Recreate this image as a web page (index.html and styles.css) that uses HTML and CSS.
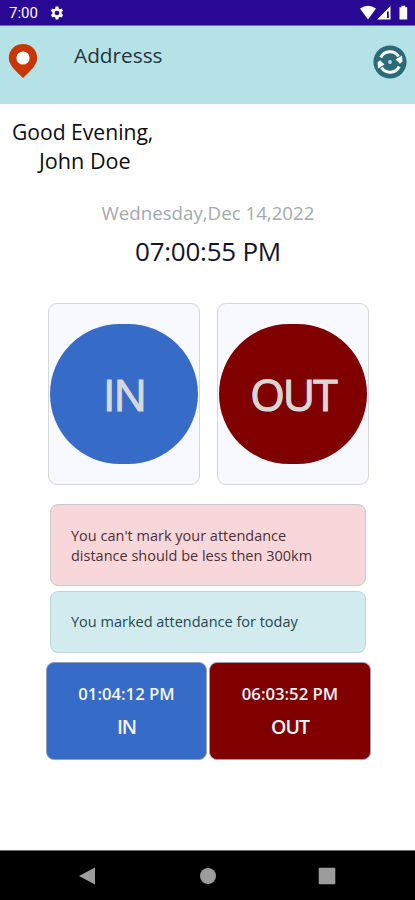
FILE: index.html
```html
<!DOCTYPE html>
<html lang="en">
<head>
<meta charset="utf-8">
<title>Attendance</title>
<link rel="stylesheet" href="styles.css">
</head>
<body>
<div class="phone">
  <div class="status">
    <span class="clock">7:00</span>
    <svg class="gear" viewBox="0 0 24 24"><path fill-rule="evenodd" d="M9.6 1h4.8l.6 3.3 1.9 1.1 3.2-1.2 2.4 4.1-2.6 2.2v2.9l2.6 2.2-2.4 4.1-3.2-1.2-1.9 1.1-.6 3.4H9.6L9 19.600l-1.900-1.100-3.200 1.200-2.400-4.100 2.600-2.200v-2.900L1.500 8.300l2.400-4.100 3.200 1.200L9 4.300zM12 8a4 4 0 1 0 0 8 4 4 0 0 0 0-8z"/></svg>
    <svg class="signals" viewBox="0 0 48 16"><path d="M0 3.500Q8 -2 16 3.500L8 14.500z"/><path fill-rule="evenodd" d="M17 14.500L30.500 1v13.500zM27 6.500v6.500h1.800V6.500z"/><path d="M39.500 2.200h2V.800h3.800v1.400h1.900V14.500h-7.700z"/></svg>
  </div>
  <header class="bar">
    <svg class="pin" viewBox="0 0 30 36"><path fill="#c93606" d="M15 1C7 1 .800 7 .800 15c0 7.500 7.200 13 14.200 20 7-7 14.200-12.500 14.200-20C29.200 7 23 1 15 1z"/><circle cx="15" cy="15" r="6.600" fill="#fff"/></svg>
    <span class="address">Addresss</span>
    <svg class="sync" viewBox="0 0 34 34"><circle cx="17" cy="17" r="16.600" fill="#2b6a78"/><g fill="none" stroke="#fff" stroke-width="3"><path d="M7.800 12.500A10.200 10.200 0 0 1 25.500 11.500"/><path d="M26.200 21.500A10.200 10.200 0 0 1 8.500 22.500"/></g><path fill="#fff" d="M22.500 14.500l6.500-4 .5 6-2.500 2.300zM11.500 19.500L5 23.500 4.500 17.500l2.500-2.300z"/><circle cx="17" cy="17" r="1.900" fill="#b5e2e7"/></svg>
  </header>
  <main>
    <div class="greeting"><p class="hello">Good Evening,</p><p class="name">John Doe</p></div>
    <p class="date">Wednesday,Dec 14,2022</p>
    <p class="time">07:00:55 PM</p>
    <div class="actions">
      <div class="card"><button class="mark in">IN</button></div>
      <div class="card"><button class="mark out">OUT</button></div>
    </div>
    <div class="alert error"><p>You can't mark your attendance</p><p>distance should be less then 300km</p></div>
    <div class="alert info"><p>You marked attendance for today</p></div>
    <div class="records">
      <div class="record in"><span>01:04:12 PM</span><b>IN</b></div>
      <div class="record out"><span>06:03:52 PM</span><b>OUT</b></div>
    </div>
  </main>
  <nav class="nav"><svg viewBox="0 0 18 18"><path d="M0 9L16 .500v17z"/></svg><svg viewBox="0 0 18 18"><circle cx="9" cy="9" r="8"/></svg><svg viewBox="0 0 18 18"><rect x=".700" y=".700" width="16.600" height="16.600" rx="1"/></svg></nav>
</div>
</body>
</html>
```
FILE: styles.css
```css
* { box-sizing: border-box; }
body { margin: 0; background: #fff; font-family: "Open Sans", sans-serif; }
p { margin: 0; white-space: nowrap; }
.phone { width: 415px; height: 900px; display: flex; flex-direction: column; overflow: hidden; }
.status { height: 26px; background: #290894; border-bottom: 1px solid #6a70ba; display: flex; align-items: center; padding: 1px 7px 0 9px; color: #fff; }
.clock { font: 15px/20px Roboto, sans-serif; width: 41px; }
.gear { width: 14px; height: 14px; fill: #fff; }
.signals { width: 48px; height: 16px; margin-left: auto; fill: #fff; }
.bar { height: 78px; background: #b5e2e7; display: flex; align-items: flex-start; padding: 17px 8px 0; }
.pin { width: 30px; height: 36px; }
.address { font-size: 20.8px; line-height: 24px; margin-left: 36px; color: #26333d; }
.sync { width: 34px; height: 34px; margin: 2px 0 0 auto; }
main { flex: 1; }
.greeting { padding: 13px 0 0 12px; color: #0b0b0f; font-size: 21.1px; line-height: 29px; }
.name { padding-left: 27px; font-size: 21.6px; line-height: 30px; }
.date { margin-top: 25px; padding-left: 1px; text-align: center; font-size: 18.7px; line-height: 24px; color: #a5a9ac; }
.time { margin-top: 9px; padding-left: 1px; text-align: center; font-size: 26px; letter-spacing: -.25px; line-height: 34px; color: #14152c; }
.actions { display: flex; gap: 17px; margin: 35px 0 0 48px; }
.card { width: 152px; height: 182px; border: 1px solid #d5d6dc; border-radius: 9px; background: #f8f9ff; display: flex; align-items: center; justify-content: center; }
.mark { width: 148px; height: 140px; padding: 0; border: 0; border-radius: 70px; color: #d8d8d8; font: 400 44.5px/60px "Open Sans", sans-serif; letter-spacing: -2px; -webkit-text-stroke: 1.1px #d8d8d8; }
.in { background: #366bc7; }
.out { background: #800000; }
.alert { width: 316px; margin-left: 50px; border: 1px solid #cdc9cc; border-radius: 8px; padding-left: 20px; font-size: 14.5px; line-height: 20px; }
.error { height: 82px; margin-top: 19px; padding-top: 21px; background: #f8d7da; color: #4e3037; }
.info { height: 62px; margin-top: 5px; padding-top: 20px; background: #d1ebef; border-color: #bdd6d8; color: #26474f; }
.records { display: flex; gap: 2px; margin: 9px 0 0 46px; }
.record { width: 161px; height: 98px; border: 1px solid #999fb6; border-radius: 8px; color: #f5f4f7; display: flex; flex-direction: column; align-items: center; padding-top: 19px; }
.record.out { width: 162px; }
.record span { font-weight: 600; font-size: 16.700px; line-height: 24px; }
.record b { font-weight: 600; font-size: 19.500px; line-height: 30px; letter-spacing: -1px; margin-top: 6px; }
.nav { height: 50px; background: #000; border-top: 1px solid #666; display: flex; justify-content: space-between; padding: 16px 79px 0; }
.nav svg { width: 18px; height: 18px; fill: #9c9c9c; }
```
